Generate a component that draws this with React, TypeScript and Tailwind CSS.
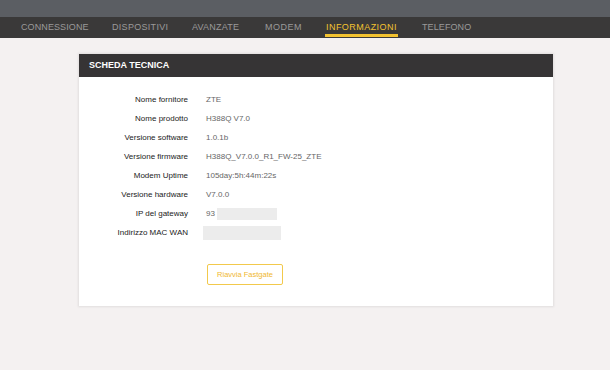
const NAV = [
  { label: "CONNESSIONE", cls: "w-[67px] tracking-[0.1px]" },
  { label: "DISPOSITIVI", cls: "w-[56px] tracking-[0.3px]" },
  { label: "AVANZATE", cls: "w-[49px] tracking-[0.2px]" },
  { label: "MODEM", cls: "w-[37px] tracking-[0.5px]" },
  { label: "INFORMAZIONI", cls: "w-[72px] tracking-[0.45px]" },
  { label: "TELEFONO", cls: "w-[49px] tracking-[0.1px]" },
];

type Row = { label: string; value?: string; blur?: "ip" | "mac" };

const ROWS: Row[] = [
  { label: "Nome fornitore", value: "ZTE" },
  { label: "Nome prodotto", value: "H388Q V7.0" },
  { label: "Versione software", value: "1.0.1b" },
  { label: "Versione firmware", value: "H388Q_V7.0.0_R1_FW-25_ZTE" },
  { label: "Modem Uptime", value: "105day:5h:44m:22s" },
  { label: "Versione hardware", value: "V7.0.0" },
  { label: "IP del gateway", value: "93", blur: "ip" },
  { label: "Indirizzo MAC WAN", blur: "mac" },
];

export default function App() {
  return (
    <div
      className="w-[610px] h-[370px] bg-[#f4f1f1] overflow-hidden"
      style={{ fontFamily: '"Liberation Sans", Arial, sans-serif' }}
    >
      {/* top band */}
      <div className="h-[17px] bg-[#5b5e63]" />

      {/* nav */}
      <nav className="h-[21px] bg-[#3a3939] flex items-stretch pl-[21px] gap-[24px]">
        {NAV.map((n) => {
          const active = n.label === "INFORMAZIONI";
          return (
            <div
              key={n.label}
              className={`relative flex items-center whitespace-nowrap text-[9px] ${n.cls} ${
                active ? "text-[#f2c230]" : "text-[#9a9a9a]"
              }`}
            >
              {n.label}
              {active && <div className="absolute left-[-1px] right-0 bottom-[1px] h-[3px] bg-[#f2c230]" />}
            </div>
          );
        })}
      </nav>

      {/* card */}
      <div className="mt-[16px] ml-[79px] w-[474px] h-[252px] bg-white shadow-[0_0_2px_1px_rgba(0,0,0,0.08)]">
        <div className="h-[23px] bg-[#363435] flex items-center pl-[10px] text-white text-[9px] font-bold">
          SCHEDA TECNICA
        </div>

        <div className="pt-[13px] flex flex-col">
          {ROWS.map((r) => (
            <div key={r.label} className="h-[19px] flex items-center text-[8px]">
              <div className="w-[109px] text-right text-[#222]">{r.label}</div>
              <div className="ml-[18px] flex items-center text-[#666]">
                {r.value}
                {r.blur === "ip" && <div className="ml-[2px] w-[60px] h-[12px] bg-[#ececec]" />}
                {r.blur === "mac" && <div className="ml-[-3px] w-[78px] h-[14px] bg-[#ececec]" />}
              </div>
            </div>
          ))}
        </div>

        <div className="mt-[18px] ml-[128px]">
          <button className="w-[76px] h-[21px] rounded-[2px] border border-[#f2c94c] text-[#f0b830] text-[7.5px] bg-white">
            Riavvia Fastgate
          </button>
        </div>
      </div>
    </div>
  );
}
